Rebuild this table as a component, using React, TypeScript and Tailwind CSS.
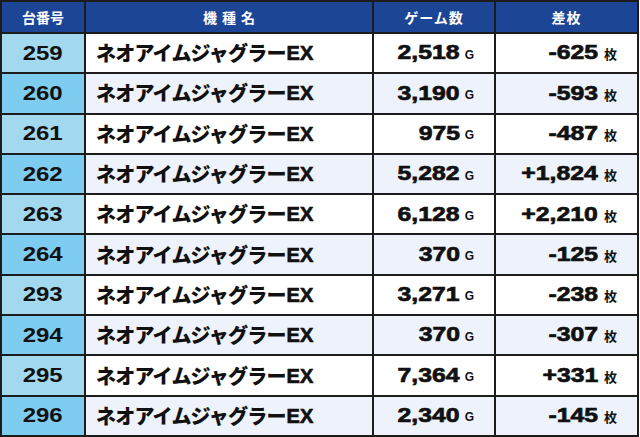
const rows = [
  { no: '259', games: '2,518', diff: '-625' },
  { no: '260', games: '3,190', diff: '-593' },
  { no: '261', games: '975', diff: '-487' },
  { no: '262', games: '5,282', diff: '+1,824' },
  { no: '263', games: '6,128', diff: '+2,210' },
  { no: '264', games: '370', diff: '-125' },
  { no: '293', games: '3,271', diff: '-238' },
  { no: '294', games: '370', diff: '-307' },
  { no: '295', games: '7,364', diff: '+331' },
  { no: '296', games: '2,340', diff: '-145' },
];

const num = "font-['Liberation_Sans','Noto_Sans_CJK_JP',sans-serif] font-bold";
const jp = "font-['Noto_Sans_CJK_JP',sans-serif] font-bold";
const heavy = '[-webkit-text-stroke:0.7px_#111]';

export default function App() {
  return (
    <div className="w-[640px] h-[437px] bg-white">
      <div className="w-[639px] h-[437px] bg-[#1c1c1c] p-[2px] grid grid-cols-[82px_286px_120px_141px] grid-rows-[30px_repeat(10,1fr)] gap-[2px]">
        <div className={`bg-[#1d4596] text-white text-[14px] flex items-center justify-center ${jp}`}>台番号</div>
        <div className={`bg-[#1d4596] text-white text-[14px] flex items-center justify-center tracking-[5px] pl-[5px] ${jp}`}>機種名</div>
        <div className={`bg-[#1d4596] text-white text-[14px] flex items-center justify-center tracking-[1px] ${jp}`}>ゲーム数</div>
        <div className={`bg-[#1d4596] text-white text-[14px] flex items-center justify-center tracking-[1px] ${jp}`}>差枚</div>
        {rows.map((r, i) => {
          const even = i % 2 === 1;
          const cell = even ? 'bg-[#eef3fb]' : 'bg-white';
          return (
            <div key={r.no} className="contents">
              <div className={`${even ? 'bg-[#7ecdf1]' : 'bg-[#a3d9ef]'} flex items-center justify-center text-[#111] pb-[1px]`}>
                <span className={`inline-block text-[20px] scale-x-[1.2] ${num}`}>{r.no}</span>
              </div>
              <div className={`${cell} flex items-center pl-[10px] text-[20px] text-[#111] tracking-[-0.8px] font-['Noto_Sans_CJK_JP',sans-serif] font-black`}>
                ネオアイムジャグラー<span className={`tracking-normal ml-[1px] ${heavy} ${num}`}>EX</span>
              </div>
              <div className={`${cell} flex items-center justify-end pr-[20px] text-[#111] pb-[2px]`}>
                <span className={`inline-block text-[21px] scale-x-[1.18] origin-right ${heavy} ${num}`}>{r.games}</span>
                <span className={`text-[12px] ml-[5px] mt-[5px] ${num}`}>G</span>
              </div>
              <div className={`${cell} flex items-center justify-end pr-[20px] text-[#111] pb-[2px]`}>
                <span className={`inline-block text-[21px] scale-x-[1.18] origin-right ${heavy} ${num}`}>{r.diff}</span>
                <span className={`text-[13px] ml-[6px] mt-[4px] ${jp}`}>枚</span>
              </div>
            </div>
          );
        })}
      </div>
    </div>
  );
}
